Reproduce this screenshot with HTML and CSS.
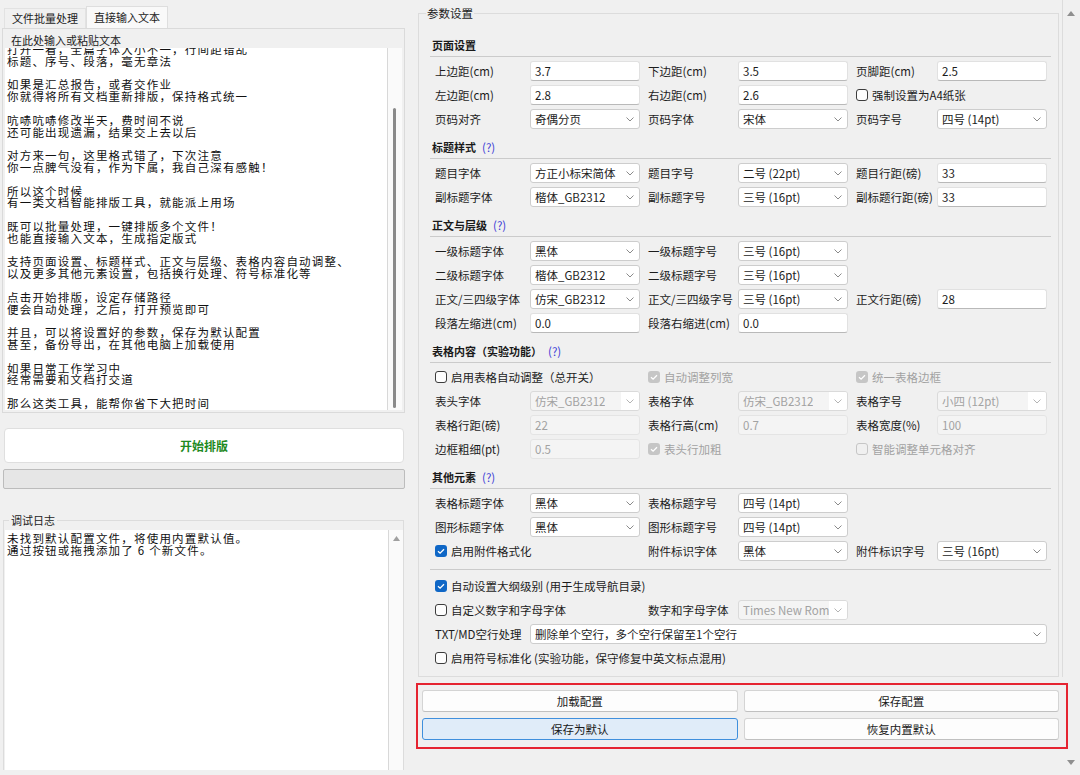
FILE: index.html
```html
<!DOCTYPE html>
<html>
<head>
    <meta charset="utf-8">
    <title>文档智能排版工具</title>
    <link rel="stylesheet" href="styles.css">
</head>
<body>
<div class="window">

    <!-- ================= 左侧：输入区 ================= -->
    <div class="left">
        <div class="tabs">
            <div class="tab">文件批量处理</div>
            <div class="tab active">直接输入文本</div>
        </div>
        <div class="tab-pane">
            <div class="pane-label">在此处输入或粘贴文本</div>
            <div class="textbox">
                <div class="text-area"><div class="lines">打开一看，全篇字体大小不一，行间距错乱
标题、序号、段落，毫无章法

如果是汇总报告，或者交作业
你就得将所有文档重新排版，保持格式统一

吭哧吭哧修改半天，费时间不说
还可能出现遗漏，结果交上去以后

对方来一句，这里格式错了，下次注意
你一点脾气没有，作为下属，我自己深有感触！

所以这个时候
有一类文档智能排版工具，就能派上用场

既可以批量处理，一键排版多个文件！
也能直接输入文本，生成指定版式

支持页面设置、标题样式、正文与层级、表格内容自动调整、
以及更多其他元素设置，包括换行处理、符号标准化等

点击开始排版，设定存储路径
便会自动处理，之后，打开预览即可

并且，可以将设置好的参数，保存为默认配置
甚至，备份导出，在其他电脑上加载使用

如果日常工作学习中
经常需要和文档打交道

那么这类工具，能帮你省下大把时间</div></div>
                <div class="vtrack"><div class="thumb"></div></div>
            </div>
        </div>

        <button class="start-btn">开始排版</button>
        <div class="progress"></div>

        <fieldset class="log-group">
            <legend>调试日志</legend>
            <div class="logbox">
                <div class="log-text">未找到默认配置文件，将使用内置默认值。
通过按钮或拖拽添加了 6 个新文件。</div>
                <div class="log-track">
                    <svg class="arrow-up" width="7" height="5" viewBox="0 0 7 5"><path d="M3.5 0 L7 5 L0 5 Z" fill="#a0a0a0"/></svg>
                </div>
            </div>
        </fieldset>
    </div>

    <!-- ================= 右侧：参数设置 ================= -->
    <div class="right">
        <div class="right-main">
            <div class="param-area">
                <fieldset class="params">
                    <legend>参数设置</legend>

                    <!-- 页面设置 -->
                    <div class="sec-title">页面设置</div>
                    <div class="form">
                        <span class="lbl">上边距(cm)</span><input class="edit" value="3.7">
                        <span class="lbl">下边距(cm)</span><input class="edit" value="3.5">
                        <span class="lbl">页脚距(cm)</span><input class="edit" value="2.5">

                        <span class="lbl">左边距(cm)</span><input class="edit" value="2.8">
                        <span class="lbl">右边距(cm)</span><input class="edit" value="2.6">
                        <label class="check span2"><span class="box"></span>强制设置为A4纸张</label>

                        <span class="lbl">页码对齐</span>
                        <div class="combo"><span>奇偶分页</span><i class="arrow"><svg width="8" height="5" viewBox="0 0 8 5"><path d="M0.5 0.5 L4 4 L7.5 0.5" fill="none" stroke="#8a8a8a"/></svg></i></div>
                        <span class="lbl">页码字体</span>
                        <div class="combo"><span>宋体</span><i class="arrow"><svg width="8" height="5" viewBox="0 0 8 5"><path d="M0.5 0.5 L4 4 L7.5 0.5" fill="none" stroke="#8a8a8a"/></svg></i></div>
                        <span class="lbl">页码字号</span>
                        <div class="combo"><span>四号 (14pt)</span><i class="arrow"><svg width="8" height="5" viewBox="0 0 8 5"><path d="M0.5 0.5 L4 4 L7.5 0.5" fill="none" stroke="#8a8a8a"/></svg></i></div>
                    </div>

                    <!-- 标题样式 -->
                    <div class="sec-title">标题样式 <span class="help">(?)</span></div>
                    <div class="form">
                        <span class="lbl">题目字体</span>
                        <div class="combo"><span>方正小标宋简体</span><i class="arrow"><svg width="8" height="5" viewBox="0 0 8 5"><path d="M0.5 0.5 L4 4 L7.5 0.5" fill="none" stroke="#8a8a8a"/></svg></i></div>
                        <span class="lbl">题目字号</span>
                        <div class="combo"><span>二号 (22pt)</span><i class="arrow"><svg width="8" height="5" viewBox="0 0 8 5"><path d="M0.5 0.5 L4 4 L7.5 0.5" fill="none" stroke="#8a8a8a"/></svg></i></div>
                        <span class="lbl">题目行距(磅)</span><input class="edit" value="33">

                        <span class="lbl">副标题字体</span>
                        <div class="combo"><span>楷体_GB2312</span><i class="arrow"><svg width="8" height="5" viewBox="0 0 8 5"><path d="M0.5 0.5 L4 4 L7.5 0.5" fill="none" stroke="#8a8a8a"/></svg></i></div>
                        <span class="lbl">副标题字号</span>
                        <div class="combo"><span>三号 (16pt)</span><i class="arrow"><svg width="8" height="5" viewBox="0 0 8 5"><path d="M0.5 0.5 L4 4 L7.5 0.5" fill="none" stroke="#8a8a8a"/></svg></i></div>
                        <span class="lbl">副标题行距(磅)</span><input class="edit" value="33">
                    </div>

                    <!-- 正文与层级 -->
                    <div class="sec-title">正文与层级 <span class="help">(?)</span></div>
                    <div class="form">
                        <span class="lbl first">一级标题字体</span>
                        <div class="combo"><span>黑体</span><i class="arrow"><svg width="8" height="5" viewBox="0 0 8 5"><path d="M0.5 0.5 L4 4 L7.5 0.5" fill="none" stroke="#8a8a8a"/></svg></i></div>
                        <span class="lbl">一级标题字号</span>
                        <div class="combo"><span>三号 (16pt)</span><i class="arrow"><svg width="8" height="5" viewBox="0 0 8 5"><path d="M0.5 0.5 L4 4 L7.5 0.5" fill="none" stroke="#8a8a8a"/></svg></i></div>

                        <span class="lbl first">二级标题字体</span>
                        <div class="combo"><span>楷体_GB2312</span><i class="arrow"><svg width="8" height="5" viewBox="0 0 8 5"><path d="M0.5 0.5 L4 4 L7.5 0.5" fill="none" stroke="#8a8a8a"/></svg></i></div>
                        <span class="lbl">二级标题字号</span>
                        <div class="combo"><span>三号 (16pt)</span><i class="arrow"><svg width="8" height="5" viewBox="0 0 8 5"><path d="M0.5 0.5 L4 4 L7.5 0.5" fill="none" stroke="#8a8a8a"/></svg></i></div>

                        <span class="lbl first">正文/三四级字体</span>
                        <div class="combo"><span>仿宋_GB2312</span><i class="arrow"><svg width="8" height="5" viewBox="0 0 8 5"><path d="M0.5 0.5 L4 4 L7.5 0.5" fill="none" stroke="#8a8a8a"/></svg></i></div>
                        <span class="lbl">正文/三四级字号</span>
                        <div class="combo"><span>三号 (16pt)</span><i class="arrow"><svg width="8" height="5" viewBox="0 0 8 5"><path d="M0.5 0.5 L4 4 L7.5 0.5" fill="none" stroke="#8a8a8a"/></svg></i></div>
                        <span class="lbl">正文行距(磅)</span><input class="edit" value="28">

                        <span class="lbl first">段落左缩进(cm)</span><input class="edit" value="0.0">
                        <span class="lbl">段落右缩进(cm)</span><input class="edit" value="0.0">
                    </div>

                    <!-- 表格内容 -->
                    <div class="sec-title">表格内容（实验功能） <span class="help">(?)</span></div>
                    <div class="form">
                        <label class="check span2"><span class="box"></span>启用表格自动调整（总开关）</label>
                        <label class="check span2 dis"><span class="box on"><svg width="12" height="12" viewBox="0 0 12 12"><path d="M3 6.2 L5.1 8.2 L9 4.2" fill="none" stroke="#fff" stroke-width="1.3"/></svg></span>自动调整列宽</label>
                        <label class="check span2 dis"><span class="box on"><svg width="12" height="12" viewBox="0 0 12 12"><path d="M3 6.2 L5.1 8.2 L9 4.2" fill="none" stroke="#fff" stroke-width="1.3"/></svg></span>统一表格边框</label>

                        <span class="lbl">表头字体</span>
                        <div class="combo dis"><span>仿宋_GB2312</span><i class="arrow"><svg width="8" height="5" viewBox="0 0 8 5"><path d="M0.5 0.5 L4 4 L7.5 0.5" fill="none" stroke="#b4b4b4"/></svg></i></div>
                        <span class="lbl">表格字体</span>
                        <div class="combo dis"><span>仿宋_GB2312</span><i class="arrow"><svg width="8" height="5" viewBox="0 0 8 5"><path d="M0.5 0.5 L4 4 L7.5 0.5" fill="none" stroke="#b4b4b4"/></svg></i></div>
                        <span class="lbl">表格字号</span>
                        <div class="combo dis"><span>小四 (12pt)</span><i class="arrow"><svg width="8" height="5" viewBox="0 0 8 5"><path d="M0.5 0.5 L4 4 L7.5 0.5" fill="none" stroke="#b4b4b4"/></svg></i></div>

                        <span class="lbl">表格行距(磅)</span><input class="edit" value="22" disabled>
                        <span class="lbl">表格行高(cm)</span><input class="edit" value="0.7" disabled>
                        <span class="lbl">表格宽度(%)</span><input class="edit" value="100" disabled>

                        <span class="lbl">边框粗细(pt)</span><input class="edit" value="0.5" disabled>
                        <label class="check span2 dis"><span class="box on"><svg width="12" height="12" viewBox="0 0 12 12"><path d="M3 6.2 L5.1 8.2 L9 4.2" fill="none" stroke="#fff" stroke-width="1.3"/></svg></span>表头行加粗</label>
                        <label class="check span2 dis"><span class="box"></span>智能调整单元格对齐</label>
                    </div>

                    <!-- 其他元素 -->
                    <div class="sec-title">其他元素 <span class="help">(?)</span></div>
                    <div class="form last">
                        <span class="lbl first">表格标题字体</span>
                        <div class="combo"><span>黑体</span><i class="arrow"><svg width="8" height="5" viewBox="0 0 8 5"><path d="M0.5 0.5 L4 4 L7.5 0.5" fill="none" stroke="#8a8a8a"/></svg></i></div>
                        <span class="lbl">表格标题字号</span>
                        <div class="combo"><span>四号 (14pt)</span><i class="arrow"><svg width="8" height="5" viewBox="0 0 8 5"><path d="M0.5 0.5 L4 4 L7.5 0.5" fill="none" stroke="#8a8a8a"/></svg></i></div>

                        <span class="lbl first">图形标题字体</span>
                        <div class="combo"><span>黑体</span><i class="arrow"><svg width="8" height="5" viewBox="0 0 8 5"><path d="M0.5 0.5 L4 4 L7.5 0.5" fill="none" stroke="#8a8a8a"/></svg></i></div>
                        <span class="lbl">图形标题字号</span>
                        <div class="combo"><span>四号 (14pt)</span><i class="arrow"><svg width="8" height="5" viewBox="0 0 8 5"><path d="M0.5 0.5 L4 4 L7.5 0.5" fill="none" stroke="#8a8a8a"/></svg></i></div>

                        <label class="check span2 first"><span class="box on"><svg width="12" height="12" viewBox="0 0 12 12"><path d="M3 6.2 L5.1 8.2 L9 4.2" fill="none" stroke="#fff" stroke-width="1.3"/></svg></span>启用附件格式化</label>
                        <span class="lbl">附件标识字体</span>
                        <div class="combo"><span>黑体</span><i class="arrow"><svg width="8" height="5" viewBox="0 0 8 5"><path d="M0.5 0.5 L4 4 L7.5 0.5" fill="none" stroke="#8a8a8a"/></svg></i></div>
                        <span class="lbl">附件标识字号</span>
                        <div class="combo"><span>三号 (16pt)</span><i class="arrow"><svg width="8" height="5" viewBox="0 0 8 5"><path d="M0.5 0.5 L4 4 L7.5 0.5" fill="none" stroke="#8a8a8a"/></svg></i></div>
                    </div>
                    <div class="sep"></div>
                    <div class="form tail">
                        <label class="check span-all"><span class="box on"><svg width="12" height="12" viewBox="0 0 12 12"><path d="M3 6.2 L5.1 8.2 L9 4.2" fill="none" stroke="#fff" stroke-width="1.3"/></svg></span>自动设置大纲级别 (用于生成导航目录)</label>

                        <label class="check span2"><span class="box"></span>自定义数字和字母字体</label>
                        <span class="lbl">数字和字母字体</span>
                        <div class="combo dis"><span>Times New Roman</span><i class="arrow"><svg width="8" height="5" viewBox="0 0 8 5"><path d="M0.5 0.5 L4 4 L7.5 0.5" fill="none" stroke="#b4b4b4"/></svg></i></div>

                        <span class="lbl first">TXT/MD空行处理</span>
                        <div class="combo span-rest"><span>删除单个空行，多个空行保留至1个空行</span><i class="arrow"><svg width="8" height="5" viewBox="0 0 8 5"><path d="M0.5 0.5 L4 4 L7.5 0.5" fill="none" stroke="#8a8a8a"/></svg></i></div>

                        <label class="check span-all"><span class="box"></span>启用符号标准化 (实验功能，保守修复中英文标点混用)</label>
                    </div>
                </fieldset>
            </div>

            <div class="actions">
                <button class="btn">加载配置</button>
                <button class="btn">保存配置</button>
                <button class="btn default">保存为默认</button>
                <button class="btn">恢复内置默认</button>
            </div>
        </div>

        <div class="vbar">
            <svg width="8" height="5" viewBox="0 0 8 5"><path d="M4 0 L8 5 L0 5 Z" fill="#8f8f8f"/></svg>
            <svg width="8" height="5" viewBox="0 0 8 5"><path d="M0 0 L8 0 L4 5 Z" fill="#8f8f8f"/></svg>
        </div>
    </div>
</div>
</body>
</html>
```

FILE: styles.css
```css
body {
    margin: 0;
    background-color: #f0f0f0;
    font-family: "Noto Sans CJK SC", "Noto Sans", sans-serif;
    font-size: 11.5px;
    color: #1c1c1c;
}

.window {
    display: flex;
    width: 1080px;
    height: 775px;
    overflow: hidden;
}

/* ===================== 左侧 ===================== */

.left {
    width: 403px;
    padding: 5px 0 0 2px;
    display: flex;
    flex-direction: column;
}

.tabs {
    display: flex;
    align-items: flex-end;
    height: 23px;
    padding-left: 2px;
}

.tab {
    height: 19px;
    line-height: 19px;
    padding: 0 7px;
    font-size: 11px;
    border: 1px solid #e2e2e2;
    border-bottom: none;
    background-color: #f0f0f0;
}

.tab.active {
    height: 22px;
    line-height: 20px;
    margin-bottom: -1px;
    background-color: #f9f9f9;
    border-color: #dedede;
}

.tab-pane {
    border: 1px solid #dadada;
    padding: 3px 2px 2px 2px;
}

.pane-label {
    line-height: 16px;
    font-size: 11px;
    padding-left: 6px;
}

.textbox {
    display: flex;
    height: 362px;
    background-color: #fff;
}

.text-area {
    flex: 1;
    overflow: hidden;
    padding-left: 2px;
    border-right: 1px solid #d8d8d8;
}

.lines {
    margin-top: -4px;
    white-space: pre;
    line-height: 11.8px;
    letter-spacing: 1.2px;
    color: #111;
}

.vtrack {
    width: 14px;
    background-color: #fafafa;
}

.thumb {
    width: 3px;
    height: 300px;
    margin: 60px 0 0 5px;
    border-radius: 2px;
    background-color: #8a8a8a;
}

.start-btn {
    margin: 15px 1px 0 2px;
    height: 35px;
    background-color: #fff;
    border: 1px solid #dfdfdf;
    border-radius: 4px;
    color: #1f8a1f;
    font-family: inherit;
    font-weight: bold;
    font-size: 12px;
}

.progress {
    margin: 6px 0 0 1px;
    height: 20px;
    box-sizing: border-box;
    background-color: #e6e6e6;
    border: 1px solid #bcbcbc;
    border-radius: 2px;
}

.log-group {
    margin: 23px 1px 0 1px;
    padding: 2px 0 0 1px;
    border: 1px solid #dcdcdc;
    border-bottom: none;
    min-width: 0;
}

.log-group legend {
    padding: 0 2px;
    margin-left: 4px;
    font-size: 11px;
    line-height: 16px;
}

.logbox {
    display: flex;
    height: 240px;
    background-color: #fff;
}

.log-text {
    flex: 1;
    padding: 2px 0 0 2px;
    white-space: pre;
    line-height: 12px;
    letter-spacing: 1.2px;
    color: #111;
    border-right: 1px solid #d8d8d8;
}

.log-track {
    width: 14px;
    background-color: #fafafa;
    display: flex;
    justify-content: center;
}

.arrow-up {
    margin-top: 6px;
}

/* ===================== 右侧 ===================== */

.right {
    flex: 1;
    display: flex;
    padding-left: 13px;
}

.right-main {
    flex: 1;
    display: flex;
    flex-direction: column;
}

.param-area {
    padding: 5px 3px 0 0;
    border-right: 1px solid #dcdcdc;
}

.params {
    margin: 0;
    padding: 13px 7px 8px 11px;
    border: 1px solid #dcdcdc;
    min-width: 0;
}

.params legend {
    padding: 0 1px;
    margin-left: -4px;
    line-height: 16px;
    font-size: 11.5px;
}

.sec-title {
    height: 22px;
    display: flex;
    align-items: center;
    gap: 6px;
    padding-left: 2px;
    border-bottom: 1px solid #cbcbcb;
    font-size: 11px;
    font-weight: bold;
    color: #1a1a1a;
}

.help {
    color: #3d3dd6;
    font-weight: normal;
    font-size: 11.5px;
}

.form {
    display: grid;
    grid-template-columns: 87px 110px 82px 110px 73px 110px;
    grid-auto-rows: 20px;
    column-gap: 8px;
    row-gap: 4px;
    padding: 4px 0 0 5px;
    margin-bottom: 7px;
}

.form.last {
    margin-bottom: 0;
}

.form.tail {
    padding-top: 6px;
    margin-bottom: 0;
}

.sep {
    margin-top: 8px;
    border-top: 1px solid #cbcbcb;
}

.first {
    grid-column-start: 1;
}

.span2 {
    grid-column-end: span 2;
}

.span-all {
    grid-column: 1 / -1;
}

.span-rest {
    grid-column: 2 / -1;
}

.lbl {
    align-self: center;
    white-space: nowrap;
    line-height: 20px;
}

.edit {
    width: 100%;
    height: 20px;
    box-sizing: border-box;
    padding: 0 4px;
    border: 1px solid #e1e1e1;
    border-bottom-color: #b9b9b9;
    border-radius: 3px;
    background-color: #fff;
    font-family: inherit;
    font-size: 11.5px;
    color: #1c1c1c;
    outline: none;
}

.edit:disabled {
    background-color: #f4f4f4;
    border-color: #e4e4e4;
    color: #a2a2a2;
}

.combo {
    display: flex;
    align-items: center;
    justify-content: space-between;
    height: 20px;
    box-sizing: border-box;
    padding-left: 4px;
    border: 1px solid #cdcdcd;
    border-radius: 3px;
    background-color: #fff;
    overflow: hidden;
}

.combo span {
    white-space: nowrap;
    overflow: hidden;
}

.combo .arrow {
    flex: none;
    width: 18px;
    align-self: stretch;
    display: flex;
    align-items: center;
    justify-content: center;
}

.combo.dis {
    background-color: #f4f4f4;
    border-color: #dadada;
    color: #a2a2a2;
}

.combo.dis .arrow {
    background-color: #fff;
}

.check {
    display: flex;
    align-items: center;
    gap: 4px;
    white-space: nowrap;
}

.check.dis {
    color: #a2a2a2;
}

.box {
    flex: none;
    width: 12px;
    height: 12px;
    box-sizing: border-box;
    border: 1px solid #3c3c3c;
    border-radius: 3px;
    background-color: #fdfdfd;
    display: flex;
}

.check.dis .box {
    border-color: #c6c6c6;
    background-color: transparent;
}

.box.on {
    border: none;
    background-color: #0f67c6;
}

.check.dis .box.on {
    background-color: #c6c6c6;
}

.actions {
    margin: 6px -5px 0 -2px;
    padding: 5px 7px 7px 4px;
    border: 2px solid #e52431;
    display: grid;
    grid-template-columns: 1fr 1fr;
    gap: 6px;
}

.btn {
    height: 22px;
    padding: 0;
    border: 1px solid #d4d4d4;
    border-bottom-color: #c0c0c0;
    border-radius: 3px;
    background-color: #fdfdfd;
    font-family: inherit;
    font-size: 11.5px;
    color: #1a1a1a;
}

.btn.default {
    background-color: #e0ecf9;
    border-color: #3f8fdd;
}

.vbar {
    width: 17px;
    display: flex;
    flex-direction: column;
    align-items: center;
    justify-content: space-between;
    padding: 11px 2px 10px 0;
    box-sizing: border-box;
}
```
